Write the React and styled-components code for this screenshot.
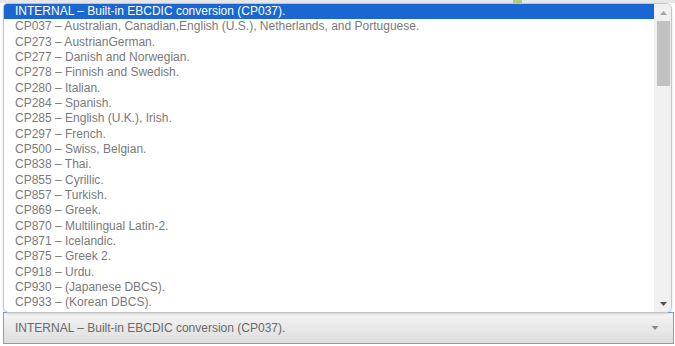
import React from 'react';
import styled, { createGlobalStyle } from 'styled-components';

const GlobalStyle = createGlobalStyle`
  html, body {
    margin: 0;
    padding: 0;
    background: #fff;
  }
  body {
    font-family: "Liberation Sans", Arial, sans-serif;
  }
`;

const Page = styled.div`
  width: 675px;
  height: 346px;
  padding: 3px 1px 0 3px;
  box-sizing: border-box;
  background:
    linear-gradient(#b5c98a, #b5c98a) 513px 0 / 9px 3px no-repeat,
    linear-gradient(#e6e6e6, #e6e6e6) 0 0 / 100% 3px no-repeat,
    #fff;
  display: flex;
  flex-direction: column;
`;

const ListBox = styled.div`
  width: 669px;
  height: 310px;
  box-sizing: border-box;
  border: 1px solid #c4c4c4;
  border-radius: 4px 6px 6px 6px;
  background: #fff;
  display: flex;
  overflow: hidden;
  box-shadow: 0 1px 2px rgba(0, 0, 0, 0.15);
  position: relative;
  z-index: 1;
`;

const Options = styled.div`
  flex: 1;
  overflow: hidden;
`;

const Option = styled.div`
  height: 15.33px;
  line-height: 15.33px;
  padding-left: 11px;
  font-size: 12px;
  white-space: nowrap;
  color: ${p => (p.selected ? '#fff' : '#7a7a7a')};
  background: ${p => (p.selected ? '#1a67d2' : 'transparent')};
`;

const Scrollbar = styled.div`
  width: 15px;
  background: #f0f0f0;
  display: flex;
  flex-direction: column;
  align-items: center;
  padding: 0 0 0 2px;
`;

const ArrowBtn = styled.div`
  height: 17px;
  display: flex;
  align-items: center;
  justify-content: center;
  width: 100%;
`;

const Thumb = styled.div`
  width: 13px;
  height: 65px;
  background: #c1c1c1;
`;

const Track = styled.div`
  flex: 1;
`;

const SelectBox = styled.div`
  width: 671px;
  height: 32px;
  box-sizing: border-box;
  border: 1px solid #6fa3dc;
  background: linear-gradient(#f4f4f4, #dedede);
  display: flex;
  align-items: center;
  justify-content: space-between;
  padding: 0 14px 0 11px;
  font-size: 12px;
  color: #6a6a6a;
  margin-top: -1px;
`;

const Triangle = ({ up, color, w = 7 }) => (
  <svg width={w} height="4" viewBox="0 0 7 4">
    <polygon points={up ? '0,4 7,4 3.5,0' : '0,0 7,0 3.5,4'} fill={color} />
  </svg>
);

const options = [
  'INTERNAL – Built-in EBCDIC conversion (CP037).',
  'CP037 – Australian, Canadian,English (U.S.), Netherlands, and Portuguese.',
  'CP273 – AustrianGerman.',
  'CP277 – Danish and Norwegian.',
  'CP278 – Finnish and Swedish.',
  'CP280 – Italian.',
  'CP284 – Spanish.',
  'CP285 – English (U.K.), Irish.',
  'CP297 – French.',
  'CP500 – Swiss, Belgian.',
  'CP838 – Thai.',
  'CP855 – Cyrillic.',
  'CP857 – Turkish.',
  'CP869 – Greek.',
  'CP870 – Multilingual Latin-2.',
  'CP871 – Icelandic.',
  'CP875 – Greek 2.',
  'CP918 – Urdu.',
  'CP930 – (Japanese DBCS).',
  'CP933 – (Korean DBCS).',
];

export default function App() {
  return (
    <>
      <GlobalStyle />
      <Page>
        <ListBox>
          <Options>
            {options.map((o, i) => (
              <Option key={o} selected={i === 0}>{o}</Option>
            ))}
          </Options>
          <Scrollbar>
            <ArrowBtn><Triangle up color="#a3a3a3" /></ArrowBtn>
            <Thumb />
            <Track />
            <ArrowBtn><Triangle color="#505050" /></ArrowBtn>
          </Scrollbar>
        </ListBox>
        <SelectBox>
          <span>INTERNAL – Built-in EBCDIC conversion (CP037).</span>
          <Triangle color="#8a8a8a" w={8} />
        </SelectBox>
      </Page>
    </>
  );
}
